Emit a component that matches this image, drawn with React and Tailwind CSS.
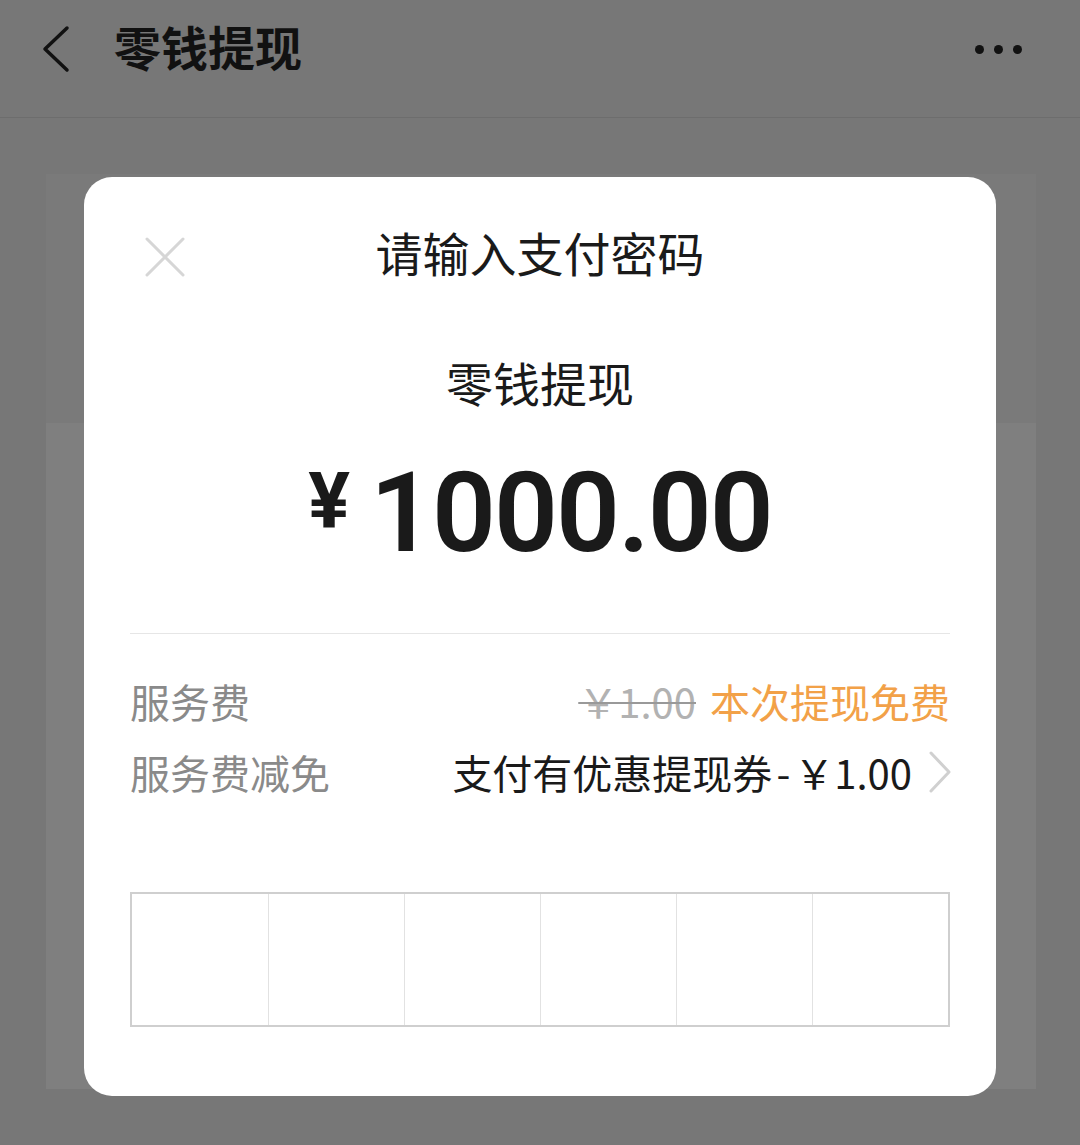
import React from 'react';

const cjk = { fontFamily: '"Noto Sans CJK SC", "Noto Sans", sans-serif' };

const PasswordBoxes = () => (
  <div className="mt-[94px] grid h-[135px] grid-cols-6 border-2 border-[#cfcfcf]">
    {[0, 1, 2, 3, 4, 5].map(i => (
      <div key={i} className={i === 0 ? '' : 'border-l border-[#e2e2e2]'} />
    ))}
  </div>
);

const App = () => {
  return (
    <div className="relative h-[1145px] w-[1080px] overflow-hidden bg-[#777777]" style={cjk}>
      {/* Barre du haut */}
      <header className="h-[118px] border-b border-[#6d6d6d]">
        <div className="flex h-[98px] items-center px-[40px]">
          <svg width="32" height="48" viewBox="0 0 32 48" className="mr-[42px]">
            <path d="M27 3 L5 24 L27 45" fill="none" stroke="#111" strokeWidth="3.5" strokeLinecap="round" strokeLinejoin="round" />
          </svg>
          <h1 className="-mt-[8px] text-[47px] font-bold leading-none text-[#111]">零钱提现</h1>
          <div className="ml-auto mr-[18px] flex gap-[10px]">
            <span className="h-[9px] w-[9px] rounded-full bg-[#111]" />
            <span className="h-[9px] w-[9px] rounded-full bg-[#111]" />
            <span className="h-[9px] w-[9px] rounded-full bg-[#111]" />
          </div>
        </div>
      </header>

      {/* Page derrière le voile */}
      <div className="mx-[46px] mt-[56px] flex h-[915px] w-[990px] flex-col">
        <div className="h-[249px] bg-[#7a7a7a]" />
        <div className="flex-1 bg-[#7f7f7f]" />
      </div>

      {/* Fenêtre mot de passe */}
      <div className="absolute left-[84px] top-[177px] flex h-[919px] w-[912px] flex-col rounded-[28px] bg-white px-[46px]">
        <div className="relative pt-[51px] text-center">
          <svg width="40" height="40" viewBox="0 0 40 40" className="absolute left-[15px] top-[60px]">
            <path d="M2 2 L38 38 M38 2 L2 38" stroke="#d6d6d6" strokeWidth="3" strokeLinecap="round" />
          </svg>
          <h2 className="text-[47px] leading-[48px] text-[#1a1a1a]">请输入支付密码</h2>
        </div>

        <p className="mt-[82px] text-center text-[47px] leading-[48px] text-[#1a1a1a]">零钱提现</p>

        <div className="mt-[51px] flex h-[112px] items-start justify-center text-[#1a1a1a]" style={{ fontFamily: 'Roboto, "Noto Sans", sans-serif' }}>
          <span className="mr-[20px] mt-[6px] text-[78px] font-bold leading-none">¥</span>
          <span className="text-[112px] font-semibold leading-none tracking-[-2px]">1000.00</span>
        </div>

        <div className="mt-[64px] border-t border-[#e6e6e6]" />

        <div className="mt-[41px] flex h-[52px] items-center text-[40px] leading-none">
          <span className="text-[#8a8a8a]">服务费</span>
          <span className="ml-auto text-[#b2b2b2] line-through decoration-[#999999] decoration-2">￥1.00</span>
          <span className="ml-[14px] text-[#f2a148]">本次提现免费</span>
        </div>

        <div className="mt-[19px] flex h-[52px] items-center text-[40px] leading-none">
          <span className="text-[#8a8a8a]">服务费减免</span>
          <span className="ml-auto text-[#1a1a1a]">
            支付有优惠提现券<span className="mx-[4px]">-</span>￥1.00
          </span>
          <svg width="24" height="44" viewBox="0 0 24 44" className="ml-[16px] -mr-[2px]">
            <path d="M3 3 L21 22 L3 41" fill="none" stroke="#d0d0d0" strokeWidth="3" strokeLinecap="round" strokeLinejoin="round" />
          </svg>
        </div>

        <PasswordBoxes />
      </div>
    </div>
  );
};

export default App;
